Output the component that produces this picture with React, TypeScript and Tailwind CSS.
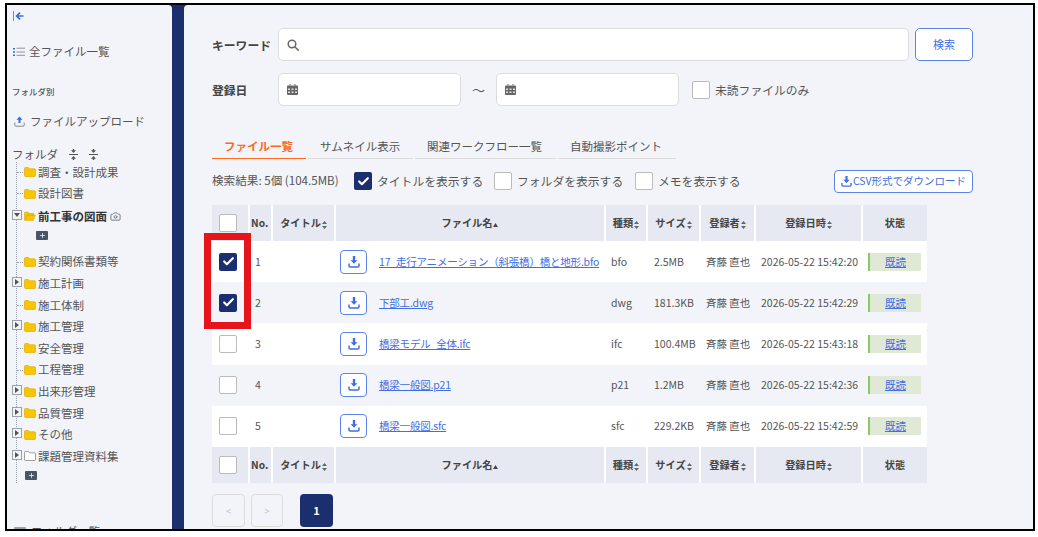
import React from "react";
import { Check, Plus, Camera } from "lucide-react";

const font = { fontFamily: '"Noto Sans CJK JP", "Noto Sans", sans-serif' };

const CollapseIcon = ({ className }: { className?: string }) => (
	<svg width="9" height="11" viewBox="0 0 9 11" className={className}>
		<path d="M4.5 4 2 1.2h1.8V0h1.4v1.2H7zM0 5h9v1H0zM4.5 7 7 9.8H5.2V11H3.8V9.8H2z" fill="#555555" />
	</svg>
);

const ListIcon = () => (
	<svg width="12" height="10" viewBox="0 0 12 10">
		<path d="M0 1h2v1.5H0zM0 4.3h2v1.5H0zM0 7.5h2V9H0z" fill="#2f6fe0" />
		<path d="M3.5 1.2H12M3.5 5H12M3.5 8.3H12" stroke="#888888" strokeWidth="0.9" fill="none" />
	</svg>
);

const UploadIcon = () => (
	<svg width="11" height="11" viewBox="0 0 11 11">
		<path d="M5.5 0.5 8.5 3.8H6.5V7h-2V3.8H2.5z" fill="#2f6fe0" />
		<path d="M.8 6.5v2.7a1 1 0 0 0 1 1h7.4a1 1 0 0 0 1-1V6.5" stroke="#888888" strokeWidth="1" fill="none" />
	</svg>
);

const CollapseBar = () => (
	<svg width="11" height="10" viewBox="0 0 11 10" fill="none">
		<path d="M.5 0v10" stroke="#888888" strokeWidth="1" />
		<path d="M10.5 5H4M7 1.6 3.6 5 7 8.4" stroke="#2f6fe0" strokeWidth="1.7" />
	</svg>
);

const SearchIcon = () => (
	<svg width="12" height="12" viewBox="0 0 12 12" fill="none" stroke="#666666" strokeWidth="1.5">
		<circle cx="5" cy="5" r="3.8" />
		<path d="m8 8 3.3 3.3" strokeLinecap="round" />
	</svg>
);

const CalendarIcon = () => (
	<svg width="11" height="11" viewBox="0 0 11 11">
		<path d="M2.5 0h1v1.5h-1zM7.5 0h1v1.5h-1z" fill="#666666" />
		<path d="M0 2.2a.8.8 0 0 1 .8-.8h9.4a.8.8 0 0 1 .8.8V10a1 1 0 0 1-1 1H1a1 1 0 0 1-1-1z" fill="#666666" />
		<path d="M1 4.5h2v1.5H1zM4.5 4.5h2v1.5h-2zM8 4.5h2v1.5H8zM1 7.5h2V9H1zM4.5 7.5h2V9h-2zM8 7.5h2V9H8z" fill="#dddddd" />
	</svg>
);

const DownloadIcon = ({ size = 12 }: { size?: number }) => (
	<svg width={size} height={size} viewBox="0 0 12 12">
		<path d="M4.8 0h2.4v4.2h2.2L6 7.8 2.6 4.2h2.2z" fill="#3f6fe0" />
		<path d="M1 7.5v2.3a1.2 1.2 0 0 0 1.2 1.2h7.6a1.2 1.2 0 0 0 1.2-1.2V7.5" stroke="#3f6fe0" strokeWidth="1.5" fill="none" />
	</svg>
);

const FolderIcon = ({ open, empty }: { open?: boolean; empty?: boolean }) => (
	<svg width="12" height="10" viewBox="0 0 12 10" className="shrink-0">
		<path
			d={open ? "M.6 9V1.2h3.6l1 1.3h4.6v1.6H3L.6 9.3h8.8l2-5.2H3" : "M.5 1.5a1 1 0 0 1 1-1h3l1.1 1.3h4.9a1 1 0 0 1 1 1V8.5a1 1 0 0 1-1 1h-9a1 1 0 0 1-1-1z"}
			fill={empty ? "#ffffff" : "#f7c600"}
			stroke={empty ? "#777777" : "#dcae00"}
			strokeWidth="0.7"
		/>
	</svg>
);

const Expander = ({ open }: { open?: boolean }) => (
	<span className="mt-[-3px] flex h-[10px] w-[10px] shrink-0 items-center justify-center border border-gray-400 bg-gray-100">
		<svg width="6" height="6" viewBox="0 0 6 6">
			<path d={open ? "M0 1h6L3 5z" : "M1 0v6l4-3z"} fill="#555555" />
		</svg>
	</span>
);

const AddFolder = () => (
	<span className="flex h-[9px] w-[12px] items-center justify-center rounded-[1px] bg-gray-600">
		<Plus size={7} strokeWidth={3} className="text-gray-200" />
	</span>
);

const folders = [
	{ name: "調査・設計成果" },
	{ name: "設計図書" },
	{ name: "前工事の図面", open: true },
	{ name: "契約関係書類等", gap: true },
	{ name: "施工計画", exp: true },
	{ name: "施工体制" },
	{ name: "施工管理", exp: true },
	{ name: "安全管理" },
	{ name: "工程管理" },
	{ name: "出来形管理", exp: true },
	{ name: "品質管理", exp: true },
	{ name: "その他", exp: true },
	{ name: "課題管理資料集", exp: true, empty: true },
];

const Sidebar = () => (
	<aside className="h-full w-[165px] shrink-0 overflow-hidden rounded-tr-[4px] bg-[#f2f4f9] text-[11.5px] text-[#555555]">
		<div className="pl-[6px] pt-[6px]">
			<CollapseBar />
		</div>
		<div className="mt-[22px] flex items-center gap-[4px] pl-[6px]">
			<ListIcon />
			<span>全ファイル一覧</span>
		</div>
		<div className="mt-[25px] pl-[5px] text-[8.5px] font-medium leading-[12px]">フォルダ別</div>
		<div className="mt-[16px] flex items-center gap-[5px] pl-[7px]">
			<UploadIcon />
			<span>ファイルアップロード</span>
		</div>
		<div className="mt-[15px] flex items-center pl-[5px] leading-[17px]">
			<span>フォルダ</span>
			<CollapseIcon className="ml-[11px]" />
			<CollapseIcon className="ml-[11px]" />
		</div>
		<div className="ml-[9px] mt-[-1px] border-l border-dotted border-gray-400">
			{folders.map((f) => (
				<React.Fragment key={f.name}>
					<div className={`flex h-[21.6px] items-center ${f.gap ? "mt-[8px]" : ""} ${f.open ? "mt-[1px]" : ""}`}>
						<span className="ml-[-5px] flex w-[11px] shrink-0 items-center">
							{f.exp || f.open ? <Expander open={f.open} /> : <span className="ml-[5px] w-[6px] border-t border-dotted border-gray-400" />}
						</span>
						<span className="ml-[1px] mr-[2px]">
							<FolderIcon open={f.open} empty={f.empty} />
						</span>
						<span className={f.open ? "font-bold text-[#333333]" : ""}>{f.name}</span>
						{f.open && <Camera size={11} className="ml-[3px] text-gray-500" />}
					</div>
					{(f.open || f.empty) && (
						<div className={`flex h-[16px] items-center ${f.open ? "pl-[19px]" : "pl-[8px]"}`}>
							<AddFolder />
						</div>
					)}
				</React.Fragment>
			))}
		</div>
		<div className="mt-[40px] flex items-center gap-[5px] pl-[7px]">
			<span className="h-[9px] w-[12px] rounded-[1px] bg-gray-400" />
			<span>フォルダ一覧</span>
		</div>
	</aside>
);

const Box = ({ checked }: { checked?: boolean }) =>
	checked ? (
		<span className="flex h-[18px] w-[18px] shrink-0 items-center justify-center rounded-[2px] bg-[#1b2f6e]">
			<Check size={13} strokeWidth={4} className="text-white" />
		</span>
	) : (
		<span className="block h-[18px] w-[18px] shrink-0 rounded-[2px] border border-[#bbbbbb] bg-white" />
	);

const Sort = () => (
	<svg width="5" height="8" viewBox="0 0 5 8" className="ml-[1px] inline-block">
		<path d="M2.5 0 5 3H0zM2.5 8 0 5h5z" fill="#666666" />
	</svg>
);

const SortUp = () => (
	<svg width="5" height="4" viewBox="0 0 5 4" className="ml-[1px] inline-block align-middle">
		<path d="M2.5 0 5 4H0z" fill="#444444" />
	</svg>
);

const HeaderRow = () => (
	<tr className="h-[36px] text-[10.2px] font-bold text-[#444444]">
		<th className="border-r-2 border-white bg-[#e6e9f2] pl-[7px] text-left"><Box /></th>
		<th className="border-r-2 border-white bg-[#e6e9f2] pl-[1px] text-left">No.</th>
		<th className="border-r-2 border-white bg-[#e6e9f2]">タイトル<Sort /></th>
		<th className="border-r-2 border-white bg-[#e6e9f2]">ファイル名<SortUp /></th>
		<th className="border-r-2 border-white bg-[#e6e9f2]">種類<Sort /></th>
		<th className="border-r-2 border-white bg-[#e6e9f2]">サイズ<Sort /></th>
		<th className="border-r-2 border-white bg-[#e6e9f2]">登録者<Sort /></th>
		<th className="border-r-2 border-white bg-[#e6e9f2]">登録日時<Sort /></th>
		<th className="bg-[#e6e9f2]">状態</th>
	</tr>
);

const rows = [
	{ no: 1, name: "17_走行アニメーション（斜張橋）橋と地形.bfo", type: "bfo", size: "2.5MB", date: "2026-05-22 15:42:20", checked: true },
	{ no: 2, name: "下部工.dwg", type: "dwg", size: "181.3KB", date: "2026-05-22 15:42:29", checked: true },
	{ no: 3, name: "橋梁モデル_全体.ifc", type: "ifc", size: "100.4MB", date: "2026-05-22 15:43:18" },
	{ no: 4, name: "橋梁一般図.p21", type: "p21", size: "1.2MB", date: "2026-05-22 15:42:36" },
	{ no: 5, name: "橋梁一般図.sfc", type: "sfc", size: "229.2KB", date: "2026-05-22 15:42:59" },
];

const Table = () => (
	<table className="w-[715px] table-fixed border-collapse text-[10.5px] text-[#555555]">
		<colgroup>
			<col className="w-[37px]" />
			<col className="w-[23px]" />
			<col className="w-[63px]" />
			<col className="w-[270px]" />
			<col className="w-[42px]" />
			<col className="w-[53px]" />
			<col className="w-[55px]" />
			<col className="w-[107px]" />
			<col className="w-[65px]" />
		</colgroup>
		<thead>
			<HeaderRow />
		</thead>
		<tbody>
			{rows.map((r) => (
				<tr key={r.no} className={`h-[41.2px] ${r.no % 2 === 0 ? "bg-[#f2f4f9]" : "bg-white"}`}>
					<td className="pl-[7px]"><Box checked={r.checked} /></td>
					<td className="pl-[6px]">{r.no}</td>
					<td />
					<td className="whitespace-nowrap pl-[5px]">
						<span className="flex items-center">
							<span className="mr-[12px] flex h-[24px] w-[27px] shrink-0 items-center justify-center rounded-[4px] border border-[#5b83ea] bg-white">
								<DownloadIcon />
							</span>
							<a className="text-[10.5px] tracking-[-0.2px] text-[#3f6fe0] underline">{r.name}</a>
						</span>
					</td>
					<td className="pl-[6px]">{r.type}</td>
					<td className="pl-[7px]">{r.size}</td>
					<td className="whitespace-nowrap pl-[6px]">斉藤 直也</td>
					<td className="whitespace-nowrap pl-[6px]">{r.date}</td>
					<td className="pl-[6px]">
						<span className="flex h-[18px] w-[53px] items-center justify-center border-l-2 border-[#8cc866] bg-[#dfe9d6] text-[#3f6fe0] underline">既読</span>
					</td>
				</tr>
			))}
			<HeaderRow />
		</tbody>
	</table>
);

export default function App() {
	return (
		<div className="h-[537px] w-[1038px] overflow-hidden bg-white pl-[5px] pt-[3px]" style={font}>
			<div className="relative flex h-[528px] w-[1030px] overflow-hidden border-2 border-black bg-[#1b2f6e]">
				<Sidebar />
				<main className="ml-[12px] min-w-0 flex-1 rounded-tl-[4px] bg-[#f2f4f9] pl-[28px] pt-[23px] text-[#555555]">
					<div className="flex items-center">
						<span className="w-[66px] text-[11.8px] font-bold text-[#444444]">キーワード</span>
						<div className="flex h-[33px] w-[631px] items-center rounded-[5px] border border-[#dddddd] bg-white pl-[8px]">
							<SearchIcon />
						</div>
						<button className="ml-[6px] h-[33px] w-[58px] rounded-[5px] border border-[#5b83ea] bg-white text-[11px] text-[#3f6fe0]">検索</button>
					</div>
					<div className="mt-[12px] flex items-center">
						<span className="w-[66px] text-[11.8px] font-bold text-[#444444]">登録日</span>
						<div className="flex h-[33px] w-[183px] items-center rounded-[5px] border border-[#dddddd] bg-white pl-[8px]">
							<CalendarIcon />
						</div>
						<span className="w-[35px] text-center text-[13px]">〜</span>
						<div className="flex h-[33px] w-[183px] items-center rounded-[5px] border border-[#dddddd] bg-white pl-[8px]">
							<CalendarIcon />
						</div>
						<span className="ml-[13px]"><Box /></span>
						<span className="ml-[5px] text-[11.8px]">未読ファイルのみ</span>
					</div>
					<nav className="mt-[32px] flex h-[21px] items-start text-[11.5px] leading-[17px]">
						<span className="h-full w-[94px] border-b border-[#ff6a1a] pl-[12px] font-bold text-[#ff6a1a]">ファイル一覧</span>
						<span className="ml-[2px] h-full w-[105px] border-b border-[#dddddd] pl-[12px]">サムネイル表示</span>
						<span className="ml-[2px] h-full w-[141px] border-b border-[#dddddd] pl-[12px]">関連ワークフロー一覧</span>
						<span className="ml-[2px] h-full w-[118px] border-b border-[#dddddd] pl-[12px]">自動撮影ポイント</span>
					</nav>
					<div className="mt-[10px] flex h-[24px] w-[761px] items-center text-[11.8px]">
						<span className="w-[142px] whitespace-nowrap text-[11.6px]">検索結果: 5個 (104.5MB)</span>
						<Box checked />
						<span className="ml-[5px] w-[117px]">タイトルを表示する</span>
						<Box />
						<span className="ml-[5px] w-[118px]">フォルダを表示する</span>
						<Box />
						<span className="ml-[5px]">メモを表示する</span>
						<button className="ml-auto flex h-[23px] w-[139px] items-center justify-center gap-[1px] rounded-[4px] border border-[#5b83ea] bg-white text-[10.5px] text-[#3f6fe0]">
							<DownloadIcon size={11} />
							CSV形式でダウンロード
						</button>
					</div>
					<div className="mt-[12px]">
						<Table />
					</div>
					<div className="mt-[11px] flex items-center text-[10px]">
						<span className="flex h-[33px] w-[33px] items-center justify-center rounded-[4px] border border-[#dddddd] text-[#c4c4c4]">&lt;</span>
						<span className="ml-[6px] flex h-[33px] w-[32px] items-center justify-center rounded-[4px] border border-[#dddddd] text-[#c4c4c4]">&gt;</span>
						<span className="ml-[17px] flex h-[33px] w-[33px] items-center justify-center rounded-[4px] bg-[#1b2f6e] text-[11px] font-bold text-white">1</span>
					</div>
				</main>
				<div className="pointer-events-none absolute left-[197px] top-[228px] h-[96px] w-[47px] border-[7px] border-[#e8141c]" />
			</div>
		</div>
	);
}
